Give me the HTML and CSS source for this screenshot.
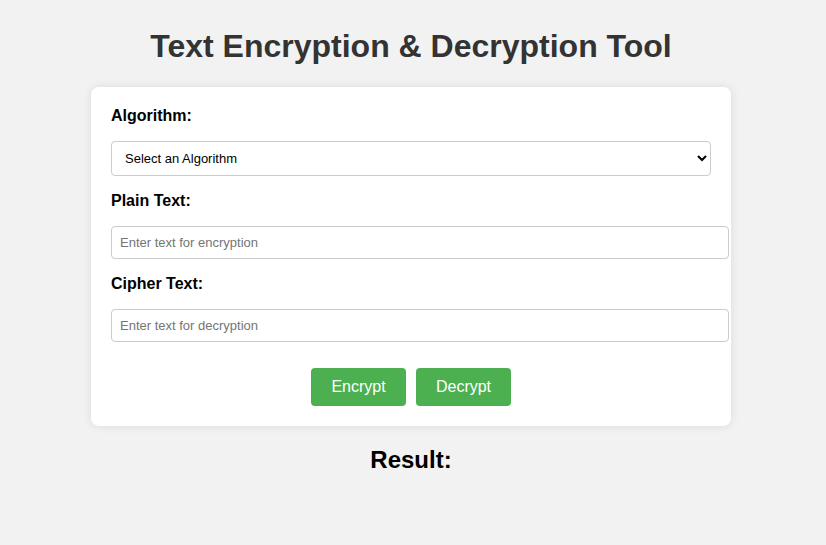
FILE: index.html
```html
<!DOCTYPE html>
<html lang="en">
<head>
<meta charset="utf-8">
<title>Text Encryption &amp; Decryption Tool</title>
<link rel="stylesheet" href="styles.css">
</head>
<body>
  <h1 class="title">Text Encryption &amp; Decryption Tool</h1>
  <div class="card">
    <label class="field-label" for="algo">Algorithm:</label>
    <select id="algo" class="select">
      <option>Select an Algorithm</option>
      <option>Caesar Cipher</option>
      <option>Vigenère Cipher</option>
    </select>
    <label class="field-label" for="plain">Plain Text:</label>
    <input id="plain" class="text-input" type="text" placeholder="Enter text for encryption">
    <label class="field-label" for="cipher">Cipher Text:</label>
    <input id="cipher" class="text-input" type="text" placeholder="Enter text for decryption">
    <div class="actions">
      <button class="btn" type="button">Encrypt</button>
      <button class="btn" type="button">Decrypt</button>
    </div>
  </div>
  <h2 class="result">Result:</h2>
</body>
</html>
```

FILE: styles.css
```css
html, body {
  margin: 0;
}
body {
  background: #f2f2f2;
  font-family: "Liberation Sans", Arial, sans-serif;
  padding: 0 4px 0 0;
}
.title {
  margin: 28px 0 22px;
  text-align: center;
  font-size: 32px;
  font-weight: bold;
  color: #333;
  line-height: 37px;
}
.card {
  width: 600px;
  margin: 0 auto;
  background: #fff;
  padding: 20px 20px 20px;
  border-radius: 8px;
  box-shadow: 0 0 10px rgba(0, 0, 0, 0.1);
}
.field-label {
  display: block;
  font-weight: bold;
  font-size: 16px;
  line-height: 18px;
  color: #000;
  margin-bottom: 16px;
}
.select {
  display: block;
  width: 600px;
  height: 35px;
  padding: 0 8px 0 9px;
  margin: 0 0 16px;
  border: 1px solid #ccc;
  border-radius: 4px;
  background: #fff;
  font-family: "Liberation Sans", Arial, sans-serif;
  font-size: 13px;
  color: #000;
  box-sizing: border-box;
}
.text-input {
  display: block;
  width: 600px;
  height: 31px;
  padding: 0 8px;
  margin: 0 0 16px;
  border: 1px solid #ccc;
  border-radius: 4px;
  font-family: "Liberation Sans", Arial, sans-serif;
  font-size: 13px;
  color: #000;
  box-sizing: content-box;
}
.text-input::placeholder {
  color: #757575;
}
.actions {
  display: flex;
  justify-content: center;
  gap: 10px;
  margin-top: 26px;
}
.btn {
  background: #4caf50;
  color: #fff;
  border: none;
  border-radius: 4px;
  width: 95px;
  height: 38px;
  padding: 0;
  font-family: "Liberation Sans", Arial, sans-serif;
  font-size: 16px;
  cursor: pointer;
}
.result {
  margin: 20px 0 0;
  text-align: center;
  font-size: 24px;
  font-weight: bold;
  color: #000;
}
```
